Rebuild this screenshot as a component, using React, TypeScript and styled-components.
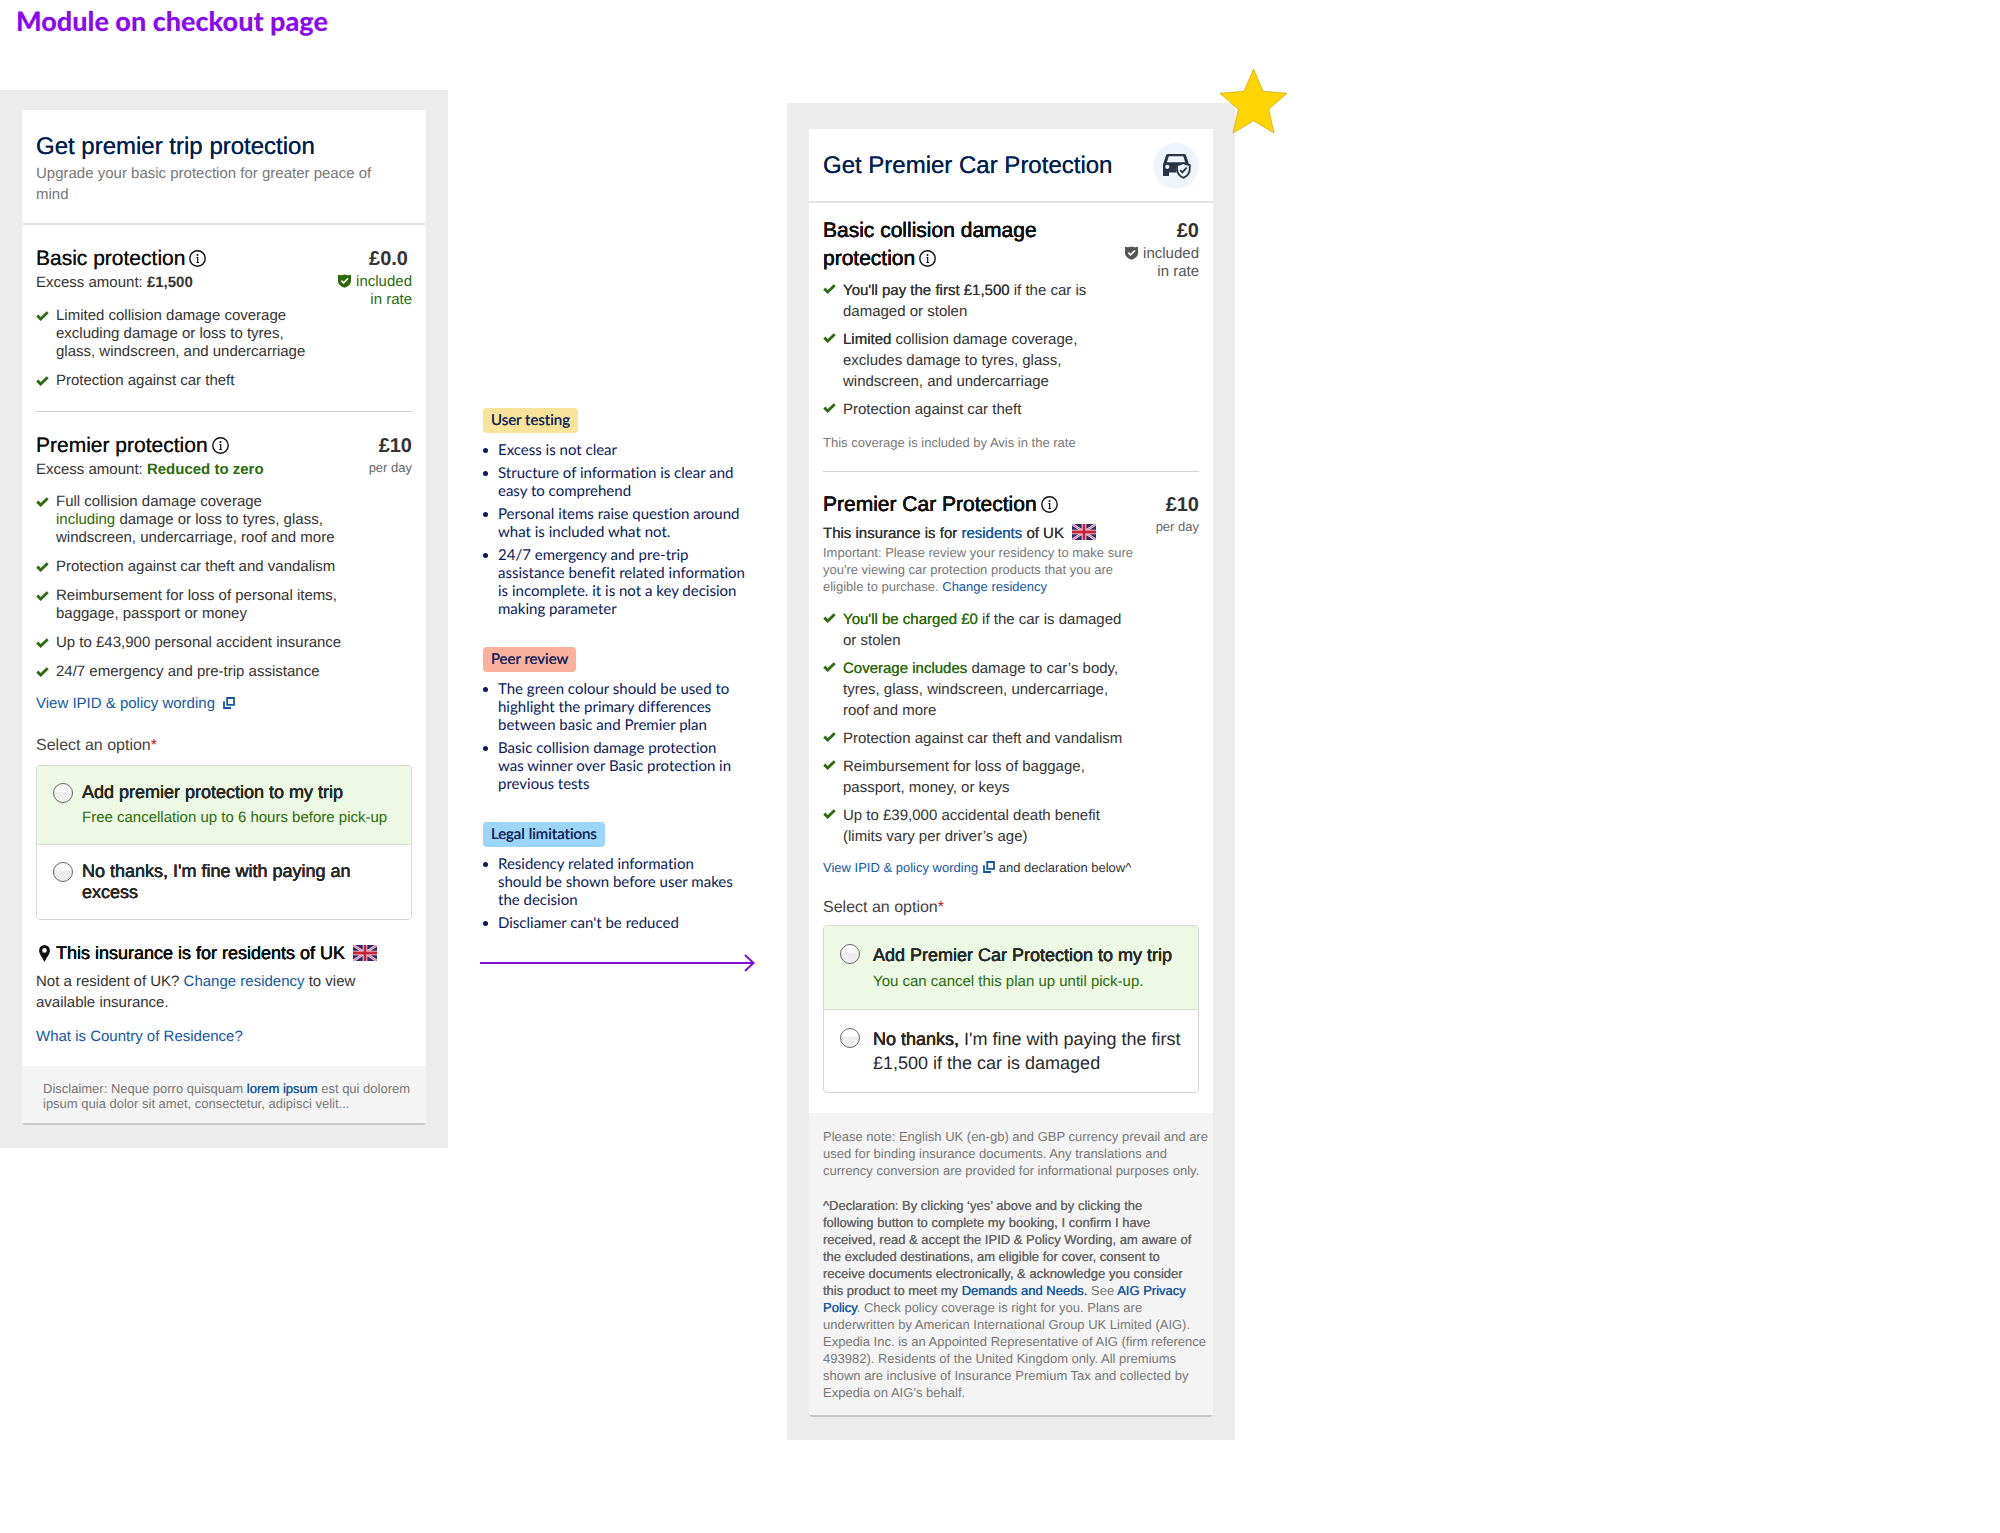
import React from "react";
import styled, { createGlobalStyle, css } from "styled-components";

const sans = `"Liberation Sans", Arial, Helvetica, sans-serif`;
const humanist = `Lato, "Open Sans", sans-serif`;

const GlobalStyle = createGlobalStyle`
  *, *::before, *::after { box-sizing: border-box; }
  body { margin: 0; background: #fff; color: #333; font-family: ${sans}; font-size: 15px; line-height: 21px; text-rendering: geometricPrecision; }
  h1, h2, h3, p, ul, fieldset { margin: 0; padding: 0; }
  fieldset { border: 0; min-width: 0; }
`;

const medium = css`
  text-shadow: 0 0 0 currentColor;
`;

const semibold = css`
  text-shadow: 0 0 0 currentColor, 0 0 0 currentColor, 0 0 0 currentColor;
`;

const Page = styled.main`
  display: flex;
  flex-direction: column;
`;

const PageTitle = styled.h1`
  height: 90px;
  padding: 5px 16px 0;
  color: #8a0af0;
  font: 900 27px/32px ${humanist};
`;

const Columns = styled.div`
  display: grid;
  grid-template-columns: minmax(0, 448px) minmax(0, 339px) minmax(0, 448px);
  align-items: start;
`;

const Frame = styled.section<{ $final?: boolean }>`
  position: relative;
  margin-top: ${(p) => (p.$final ? 13 : 0)}px;
  padding: ${(p) => (p.$final ? "26px 22px 23px" : "20px 22px 23px")};
  background: #ececec;
`;

const StarBadge = styled.svg`
  position: absolute;
  top: -35px;
  right: -53px;
  width: 69px;
  height: 66px;
`;

const Card = styled.article`
  background: #fff;
  border-radius: 0 0 4px 4px;
  border-bottom: 2px solid #c9c9c9;
`;

const CardHeader = styled.header<{ $compact?: boolean }>`
  display: flex;
  align-items: center;
  justify-content: space-between;
  padding: ${(p) => (p.$compact ? "14px 14px 12px" : "22px 14px 18px")};
  border-bottom: 2px solid #e4e4e4;
`;

const CardTitle = styled.h2`
  color: #00204f;
  font-size: 24px;
  font-weight: 400;
  line-height: 30px;
  ${medium}
`;

const Subtitle = styled.p`
  margin-top: 1px;
  color: #777;
`;

const IconDisc = styled.span`
  display: flex;
  align-items: center;
  justify-content: center;
  width: 46px;
  height: 46px;
  border-radius: 50%;
  background: #eff5fd;
`;

const CardBody = styled.div<{ $compact?: boolean }>`
  padding: ${(p) => (p.$compact ? "14px 14px 20px" : "20px 14px 19px")};
`;

const Divider = styled.hr<{ $roomy?: boolean }>`
  height: 1px;
  margin: ${(p) => (p.$roomy ? "21px 0 20px" : "20px 0 19px")};
  border: 0;
  background: #d3d3d3;
`;

const Plan = styled.section`
  display: grid;
  grid-template-columns: minmax(0, 1fr) auto;
`;

const PlanName = styled.h3<{ $strong?: boolean }>`
  color: #111;
  font-size: 21px;
  font-weight: 400;
  line-height: ${(p) => (p.$strong ? 28 : 27)}px;
  ${(p) => (p.$strong ? semibold : medium)}
`;

const InfoButton = styled.button`
  display: inline-flex;
  margin: 0 0 0 4px;
  padding: 0;
  border: 0;
  background: none;
  color: #111;
  vertical-align: -2px;
`;

const PriceBox = styled.aside<{ $color?: string }>`
  color: ${(p) => p.$color || "#555"};
  line-height: 18px;
  text-align: right;
`;

const Price = styled.strong<{ $inset?: boolean }>`
  display: block;
  padding-right: ${(p) => (p.$inset ? 4 : 0)}px;
  color: #333;
  font-size: 20px;
  line-height: 28px;
`;

const PerDay = styled.small`
  display: block;
  color: #666;
  font-size: 13px;
  line-height: 15px;
`;

const Shield = styled.svg`
  width: 13px;
  height: 14px;
  margin-right: 5px;
  vertical-align: -2px;
`;

const Benefits = styled.ul<{ $airy?: boolean; $top: number }>`
  display: flex;
  flex-direction: column;
  gap: ${(p) => (p.$airy ? 7 : 11)}px;
  margin-top: ${(p) => p.$top}px;
  line-height: ${(p) => (p.$airy ? 21 : 18)}px;
  list-style: none;
`;

const Benefit = styled.li`
  display: grid;
  grid-template-columns: 12px minmax(0, 1fr);
  column-gap: 8px;
  white-space: nowrap;
`;

const Tick = styled.svg`
  width: 13px;
  height: 10px;
  margin-top: 4px;
`;

const Medium = styled.b<{ $color?: string; $strong?: boolean }>`
  color: ${(p) => p.$color || "inherit"};
  font-weight: 400;
  ${(p) => (p.$strong ? semibold : medium)}
`;

const Green = styled.span`
  color: #2b6b0b;
`;

const GreenBold = styled.strong`
  color: #2b6b0b;
`;

const Link = styled.a`
  color: #1557a6;
  text-decoration: none;
`;

const Note = styled.p<{ $top?: number; $dark?: boolean }>`
  margin-top: ${(p) => p.$top || 0}px;
  color: ${(p) => (p.$dark ? "#333" : "#777")};
  font-size: 13px;
  line-height: 17px;
  white-space: nowrap;
`;

const Text = styled.p<{ $top?: number }>`
  margin-top: ${(p) => p.$top || 0}px;
`;

const Popup = styled.svg<{ $gap: number }>`
  width: 12px;
  height: 12px;
  margin-left: ${(p) => p.$gap}px;
  vertical-align: -1px;
`;

const Legend = styled.legend<{ $gap: number }>`
  padding: 21px 0 ${(p) => p.$gap}px;
  color: #444;
  font-size: 16px;
  line-height: 21px;
`;

const Required = styled.span`
  color: #b8231b;
`;

const Options = styled.div`
  border: 1px solid #d5d9d3;
  border-radius: 4px;
  overflow: hidden;
`;

const Option = styled.label<{ $picked?: boolean; $roomy?: boolean }>`
  display: grid;
  grid-template-columns: 20px minmax(0, 1fr);
  column-gap: ${(p) => (p.$roomy ? 13 : 9)}px;
  padding: ${(p) => (p.$roomy ? 17 : 16)}px 0 ${(p) => (p.$roomy ? 17 : 16)}px 16px;
  background: ${(p) => (p.$picked ? "#edf8e5" : "#fff")};
  color: #2a2a2a;
  font-size: 18px;
  line-height: ${(p) => (p.$roomy ? 24 : 21)}px;
  & + & { border-top: 1px solid #d5ddd0; }
`;

const Radio = styled.input`
  appearance: none;
  width: 20px;
  height: 20px;
  margin: 1px 0 0;
  border: 1px solid #666;
  border-radius: 50%;
  background: linear-gradient(#fff 35%, #ebebeb 50%, #f2f2f2);
`;

const OptionHint = styled.small`
  display: block;
  margin-top: 4px;
  color: #2b6b0b;
  font-size: 15px;
  line-height: 21px;
`;

const Residency = styled.h3`
  display: flex;
  align-items: center;
  margin: 21px 0 6px;
  padding-left: 3px;
  color: #111;
  font-size: 18px;
  font-weight: 400;
  line-height: 24px;
  ${semibold}
`;

const Pin = styled.svg`
  width: 11px;
  height: 17px;
  margin-right: 6px;
`;

const FlagIcon = styled.svg<{ $gap: number }>`
  width: 24px;
  height: 16px;
  margin-left: ${(p) => p.$gap}px;
  vertical-align: -2px;
`;

const CardFooter = styled.footer<{ $tight?: boolean }>`
  padding: ${(p) => (p.$tight ? "15px 8px 12px 21px" : "15px 8px 14px 14px")};
  background: #f4f4f4;
  color: #777;
  font-size: 13px;
  line-height: ${(p) => (p.$tight ? 15 : 17)}px;
  white-space: nowrap;
`;

const Declaration = styled.p`
  margin-top: 18px;
`;

const Notes = styled.aside`
  display: flex;
  flex-direction: column;
  gap: 29px;
  padding: 318px 32px 0 35px;
  color: #0a1a5c;
  font: 400 15px/18px ${humanist};
  font-variant-ligatures: none;
`;

const Tag = styled.h2<{ $bg: string }>`
  display: inline-block;
  margin: 0;
  padding: 0 8px;
  border-radius: 4px;
  background: ${(p) => p.$bg};
  color: #14265c;
  font-size: 15px;
  font-weight: 400;
  line-height: 25px;
  ${medium}
`;

const Bullets = styled.ul`
  display: flex;
  flex-direction: column;
  gap: 5px;
  margin-top: 8px;
  padding-left: 15px;
  list-style: none;
`;

const Bullet = styled.li`
  position: relative;
  white-space: nowrap;
  &::before {
    content: "";
    position: absolute;
    top: 7px;
    left: -15px;
    width: 5px;
    height: 5px;
    border-radius: 50%;
    background: #0a1a5c;
  }
`;

const Arrow = styled.svg`
  width: 275px;
  height: 18px;
  margin: -7px 0 0 -3px;
`;

const Info = () => (
  <InfoButton type="button" aria-label="More information">
    <svg width="17" height="17" viewBox="0 0 17 17" fill="none" stroke="currentColor">
      <circle cx="8.5" cy="8.5" r="7.7" strokeWidth="1.4" />
      <path d="M7.400 7.500H8.700V12.500M7.300 12.500h2.700" strokeWidth="1.2" />
      <circle cx="8.5" cy="4.9" r="1" fill="currentColor" stroke="none" />
    </svg>
  </InfoButton>
);

const Included = () => (
  <>
    <Shield viewBox="0 0 13 14" aria-hidden="true">
      <path d="M0 .8Q3 1.600 6.500 .6 10 1.600 13 .8V7q0 4.600-6.500 6.800Q0 11.600 0 7z" fill="currentColor" />
      <path d="M3.300 6.600 5.600 8.900 9.900 4.500" fill="none" stroke="#fff" strokeWidth="1.7" />
    </Shield>
    included
    <br />
    in rate
  </>
);

const Item = ({ children }: { children: React.ReactNode }) => (
  <Benefit>
    <Tick viewBox="0 0 13 10" aria-hidden="true">
      <path d="M1.300 4.600 4.700 8 11.700 1.300" fill="none" stroke="#2f6b12" strokeWidth="2.9" />
    </Tick>
    <span>{children}</span>
  </Benefit>
);

const Flag = ({ gap }: { gap: number }) => (
  <FlagIcon $gap={gap} viewBox="0 0 24 16" role="img" aria-label="United Kingdom">
    <rect width="24" height="16" fill="#2b2a6c" />
    <path d="M0 0 24 16M24 0 0 16" stroke="#f0dfe8" strokeWidth="2.6" />
    <path d="M0 0 24 16M24 0 0 16" stroke="#cf5a70" strokeWidth="0.9" />
    <path d="M12 0v16M0 8h24" stroke="#f7e6ec" strokeWidth="4.6" />
    <path d="M12 0v16M0 8h24" stroke="#c8213a" strokeWidth="2.8" />
  </FlagIcon>
);

const PopupIcon = ({ gap }: { gap: number }) => (
  <Popup $gap={gap} viewBox="0 0 12 12" fill="none" stroke="currentColor" strokeWidth="1.8" aria-hidden="true">
    <path d="M4.200 1H11v6.800H4.200zM1 4.300V11h7" />
  </Popup>
);

const NoteGroup = ({ tag, bg, children }: { tag: string; bg: string; children: React.ReactNode }) => (
  <section>
    <Tag $bg={bg}>{tag}</Tag>
    <Bullets>{children}</Bullets>
  </section>
);

const SelectLabel = ({ gap }: { gap: number }) => (
  <Legend $gap={gap}>
    Select an option<Required>*</Required>
  </Legend>
);

export default function App() {
  return (
    <Page>
      <GlobalStyle />
      <PageTitle>Module on checkout page</PageTitle>
      <Columns>
        <Frame>
          <Card>
            <CardHeader>
              <div>
                <CardTitle>Get premier trip protection</CardTitle>
                <Subtitle>Upgrade your basic protection for greater peace of<br />mind</Subtitle>
              </div>
            </CardHeader>
            <CardBody>
              <Plan>
                <div>
                  <PlanName>Basic protection<Info /></PlanName>
                  <Text>Excess amount: <strong>£1,500</strong></Text>
                  <Benefits $top={14}>
                    <Item>Limited collision damage coverage<br />excluding damage or loss to tyres,<br />glass, windscreen, and undercarriage</Item>
                    <Item>Protection against car theft</Item>
                  </Benefits>
                </div>
                <PriceBox $color="#2b6b0b">
                  <Price $inset>£0.0</Price>
                  <Included />
                </PriceBox>
              </Plan>
              <Divider $roomy />
              <Plan>
                <div>
                  <PlanName>Premier protection<Info /></PlanName>
                  <Text>Excess amount: <GreenBold>Reduced to zero</GreenBold></Text>
                  <Benefits $top={13}>
                    <Item>Full collision damage coverage<br /><Green>including</Green> damage or loss to tyres, glass,<br />windscreen, undercarriage, roof and more</Item>
                    <Item>Protection against car theft and vandalism</Item>
                    <Item>Reimbursement for loss of personal items,<br />baggage, passport or money</Item>
                    <Item>Up to £43,900 personal accident insurance</Item>
                    <Item>24/7 emergency and pre-trip assistance</Item>
                  </Benefits>
                </div>
                <PriceBox>
                  <Price>£10</Price>
                  <PerDay>per day</PerDay>
                </PriceBox>
              </Plan>
              <Text $top={12}><Link href="#policy">View IPID &amp; policy wording<PopupIcon gap={8} /></Link></Text>
              <fieldset>
                <SelectLabel gap={9} />
                <Options>
                  <Option $picked>
                    <Radio type="radio" name="trip" />
                    <span><Medium $strong>Add premier protection to my trip</Medium><OptionHint>Free cancellation up to 6 hours before pick-up</OptionHint></span>
                  </Option>
                  <Option>
                    <Radio type="radio" name="trip" />
                    <Medium $strong>No thanks, I'm fine with paying an<br />excess</Medium>
                  </Option>
                </Options>
              </fieldset>
              <Residency>
                <Pin viewBox="0 0 11 17" aria-hidden="true">
                  <path fillRule="evenodd" d="M5.500 0a5.400 5.400 0 0 1 5.400 5.500C10.900 9.500 7.500 12.500 5.500 17 3.500 12.500.1 9.500.1 5.500A5.400 5.400 0 0 1 5.500 0zm0 3.100a2.300 2.300 0 1 0 0 4.600 2.300 2.300 0 0 0 0-4.600z" fill="#111" />
                </Pin>
                This insurance is for residents of UK
                <Flag gap={8} />
              </Residency>
              <Text>Not a resident of UK? <Link href="#residency">Change residency</Link> to view<br />available insurance.</Text>
              <Text $top={13}><Link href="#country">What is Country of Residence?</Link></Text>
            </CardBody>
            <CardFooter $tight>
              Disclaimer: Neque porro quisquam <Link href="#lorem"><Medium>lorem ipsum</Medium></Link> est qui dolorem<br />
              ipsum quia dolor sit amet, consectetur, adipisci velit...
            </CardFooter>
          </Card>
        </Frame>

        <Notes>
          <NoteGroup tag="User testing" bg="#f8e39b">
            <Bullet>Excess is not clear</Bullet>
            <Bullet>Structure of information is clear and<br />easy to comprehend</Bullet>
            <Bullet>Personal items raise question around<br />what is included what not.</Bullet>
            <Bullet>24/7 emergency and pre-trip<br />assistance benefit related information<br />is incomplete. it is not a key decision<br />making parameter</Bullet>
          </NoteGroup>
          <NoteGroup tag="Peer review" bg="#f9b09d">
            <Bullet>The green colour should be used to<br />highlight the primary differences<br />between basic and Premier plan</Bullet>
            <Bullet>Basic collision damage protection<br />was winner over Basic protection in<br />previous tests</Bullet>
          </NoteGroup>
          <NoteGroup tag="Legal limitations" bg="#9dd5f9">
            <Bullet>Residency related information<br />should be shown before user makes<br />the decision</Bullet>
            <Bullet>Discliamer can't be reduced</Bullet>
          </NoteGroup>
          <Arrow viewBox="0 0 275 18" fill="none" stroke="#7d0fd8" strokeWidth="2" aria-hidden="true">
            <path d="M0 9H273M265 1l8.500 8-8.500 8" />
          </Arrow>
        </Notes>

        <Frame $final>
          <Card>
            <CardHeader $compact>
              <CardTitle>Get Premier Car Protection</CardTitle>
              <IconDisc>
                <svg width="29" height="25" viewBox="0 0 29 25" aria-hidden="true">
                  <path fillRule="evenodd" d="M6 0H22q1.500 0 2 1.300L26.500 8.500 27 12H14.500V18.500H7V22H1V10.500L4 1.300Q4.500 0 6 0zM6.800 2.300 4.900 8.300H23.200L21.300 2.300zM5.300 10.700a2.100 2.100 0 1 0 0 4.200 2.100 2.100 0 0 0 0-4.200z" fill="#293444" />
                  <path d="M15 11Q18.500 10.800 21.300 9 24.200 10.800 27.800 11V14.500q0 6.500-6.500 9.300Q15 21 15 14.500z" fill="#eff5fd" stroke="#293444" strokeWidth="1.8" />
                  <path d="M18.200 16.200 20.400 18.400 24.600 13.700" fill="none" stroke="#293444" strokeWidth="1.8" />
                </svg>
              </IconDisc>
            </CardHeader>
            <CardBody $compact>
              <Plan>
                <div>
                  <PlanName $strong>Basic collision damage<br />protection<Info /></PlanName>
                  <Benefits $airy $top={7}>
                    <Item><Medium>You'll pay the first £1,500</Medium> if the car is<br />damaged or stolen</Item>
                    <Item><Medium>Limited</Medium> collision damage coverage,<br />excludes damage to tyres, glass,<br />windscreen, and undercarriage</Item>
                    <Item>Protection against car theft</Item>
                  </Benefits>
                </div>
                <PriceBox>
                  <Price>£0</Price>
                  <Included />
                </PriceBox>
              </Plan>
              <Note $top={14}>This coverage is included by Avis in the rate</Note>
              <Divider />
              <Plan>
                <div>
                  <PlanName $strong>Premier Car Protection<Info /></PlanName>
                  <Text $top={4}><Medium>This insurance is for <Link href="#residents">residents</Link> of UK</Medium><Flag gap={8} /></Text>
                  <Note>Important: Please review your residency to make sure<br />you're viewing car protection products that you are<br />eligible to purchase. <Link href="#change">Change residency</Link></Note>
                  <Benefits $airy $top={14}>
                    <Item><Medium $color="#2b6b0b">You'll be charged £0</Medium> if the car is damaged<br />or stolen</Item>
                    <Item><Medium $color="#2b6b0b">Coverage includes</Medium> damage to car’s body,<br />tyres, glass, windscreen, undercarriage,<br />roof and more</Item>
                    <Item>Protection against car theft and vandalism</Item>
                    <Item>Reimbursement for loss of baggage,<br />passport, money, or keys</Item>
                    <Item>Up to £39,000 accidental death benefit<br />(limits vary per driver’s age)</Item>
                  </Benefits>
                </div>
                <PriceBox>
                  <Price>£10</Price>
                  <PerDay>per day</PerDay>
                </PriceBox>
              </Plan>
              <Note $top={12} $dark><Link href="#ipid">View IPID &amp; policy wording<PopupIcon gap={5} /></Link> and declaration below^</Note>
              <fieldset>
                <SelectLabel gap={7} />
                <Options>
                  <Option $picked $roomy>
                    <Radio type="radio" name="car" />
                    <span><Medium $strong>Add Premier Car Protection to my trip</Medium><OptionHint>You can cancel this plan up until pick-up.</OptionHint></span>
                  </Option>
                  <Option $roomy>
                    <Radio type="radio" name="car" />
                    <span><Medium $strong>No thanks,</Medium> I'm fine with paying the first<br />£1,500 if the car is damaged</span>
                  </Option>
                </Options>
              </fieldset>
            </CardBody>
            <CardFooter>
              <p>Please note: English UK (en-gb) and GBP currency prevail and are<br />used for binding insurance documents. Any translations and<br />currency conversion are provided for informational purposes only.</p>
              <Declaration>
                <Medium $color="#666">^Declaration: By clicking ‘yes’ above and by clicking the<br />following button to complete my booking, I confirm I have<br />received, read &amp; accept the IPID &amp; Policy Wording, am aware of<br />the excluded destinations, am eligible for cover, consent to<br />receive documents electronically, &amp; acknowledge you consider<br />this product to meet my <Link href="#needs">Demands and Needs.</Link></Medium> See <Link href="#privacy"><Medium>AIG Privacy<br />Policy</Medium></Link>. Check policy coverage is right for you. Plans are<br />underwritten by American International Group UK Limited (AIG).<br />Expedia Inc. is an Appointed Representative of AIG (firm reference<br />493982). Residents of the United Kingdom only. All premiums<br />shown are inclusive of Insurance Premium Tax and collected by<br />Expedia on AIG’s behalf.
              </Declaration>
            </CardFooter>
          </Card>
          <StarBadge viewBox="0 0 69 66" role="img" aria-label="Winning version">
            <path d="M34.500 1 44 23.300 68 25.300 49.700 41.300 55 65 34.500 52.700 14 65 19.300 41.300 1 25.300 25 23.300z" fill="#ffd500" stroke="#c9a400" strokeWidth="0.7" />
          </StarBadge>
        </Frame>
      </Columns>
    </Page>
  );
}
